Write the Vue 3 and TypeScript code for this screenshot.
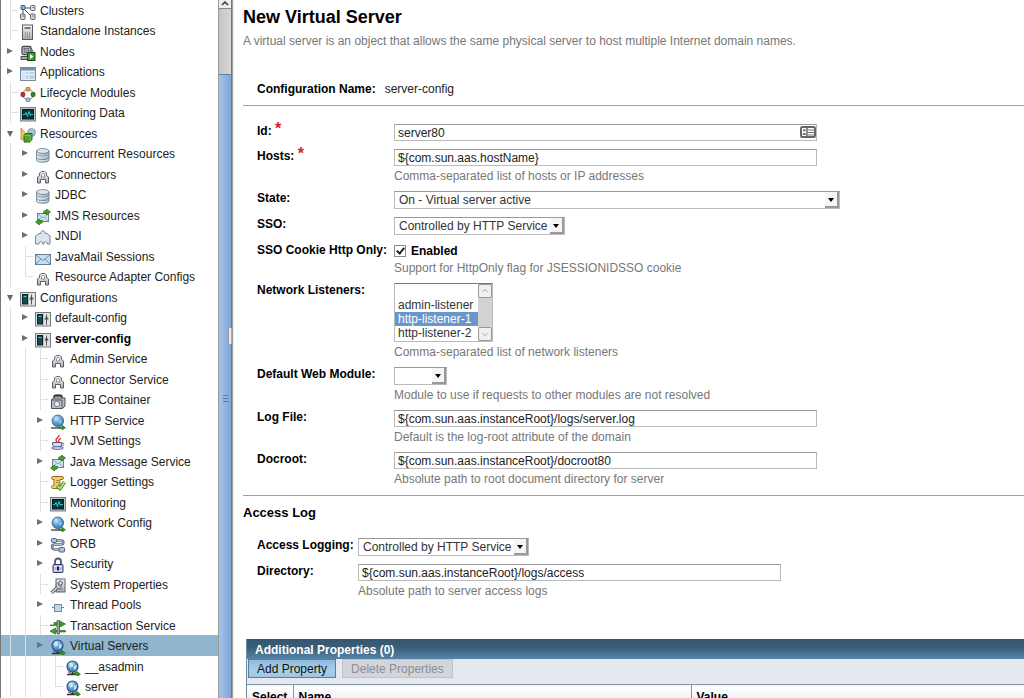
<script setup lang="ts">
import { ref } from 'vue'

type Node = { text: string; guides: string; icon: string; bold?: boolean; selected?: boolean; wide?: boolean }

/* guides: I = line, T = branch, L = last branch, > = closed, v = open */
const nodes: Node[] = [
  { text: 'Clusters', guides: 'T', icon: 'cluster' },
  { text: 'Standalone Instances', guides: 'T', icon: 'server' },
  { text: 'Nodes', guides: '>', icon: 'node' },
  { text: 'Applications', guides: '>', icon: 'app' },
  { text: 'Lifecycle Modules', guides: 'T', icon: 'lifecycle' },
  { text: 'Monitoring Data', guides: 'T', icon: 'monitor' },
  { text: 'Resources', guides: 'v', icon: 'resources' },
  { text: 'Concurrent Resources', guides: 'I>', icon: 'database' },
  { text: 'Connectors', guides: 'I>', icon: 'connector' },
  { text: 'JDBC', guides: 'I>', icon: 'database' },
  { text: 'JMS Resources', guides: 'I>', icon: 'jms' },
  { text: 'JNDI', guides: 'I>', icon: 'jndi' },
  { text: 'JavaMail Sessions', guides: 'IT', icon: 'mail' },
  { text: 'Resource Adapter Configs', guides: 'IL', icon: 'connector' },
  { text: 'Configurations', guides: 'v', icon: 'config' },
  { text: 'default-config', guides: 'I>', icon: 'config' },
  { text: 'server-config', guides: 'I>', icon: 'config', bold: true },
  { text: 'Admin Service', guides: 'IIT', icon: 'connector' },
  { text: 'Connector Service', guides: 'IIT', icon: 'connector' },
  { text: 'EJB Container', guides: 'IIT', icon: 'ejb', wide: true },
  { text: 'HTTP Service', guides: 'II>', icon: 'http' },
  { text: 'JVM Settings', guides: 'IIT', icon: 'java' },
  { text: 'Java Message Service', guides: 'II>', icon: 'jms' },
  { text: 'Logger Settings', guides: 'IIT', icon: 'logger' },
  { text: 'Monitoring', guides: 'IIT', icon: 'monitor' },
  { text: 'Network Config', guides: 'II>', icon: 'http' },
  { text: 'ORB', guides: 'II>', icon: 'orb' },
  { text: 'Security', guides: 'II>', icon: 'lock' },
  { text: 'System Properties', guides: 'IIT', icon: 'system' },
  { text: 'Thread Pools', guides: 'II>', icon: 'thread' },
  { text: 'Transaction Service', guides: 'IIT', icon: 'transaction' },
  { text: 'Virtual Servers', guides: 'II>', icon: 'virtual', selected: true },
  { text: '__asadmin', guides: 'IIIT', icon: 'virtual' },
  { text: 'server', guides: 'IIIL', icon: 'virtual' },
]

const guideClass: Record<string, string> = { I: 'line', T: 'line tee', L: 'last tee', '>': 'closed', v: 'open' }

const icons: Record<string, string> = {
  cluster:
    '<path d="M5 4h6M4 5l8 8M3 5v6" stroke="#555" fill="none"/><rect x="1" y="1.500" width="4" height="4" rx=".5" fill="#7fb2d6" stroke="#3c6280"/><rect x="10.500" y="1.500" width="4.500" height="5" rx="1" fill="#e3e3e6" stroke="#5e6066"/><rect x=".5" y="10" width="4.500" height="5.500" rx="1" fill="#d8d9dd" stroke="#5e6066"/><rect x="10.500" y="10" width="4.500" height="5.500" rx="1" fill="#d8d9dd" stroke="#5e6066"/><path d="M12 3.500h2M2 12h2M12 12h2" stroke="#888"/>',
  server:
    '<rect x="2.500" y="1" width="10" height="14.500" fill="url(#silver)" stroke="#5a5c60"/><path d="M4.500 4h6" stroke="#555" stroke-width="1.500"/><path d="M5 9h6M5 11h6M5 13h6" stroke="#777" stroke-dasharray="1 1"/>',
  node:
    '<rect x="2" y="1.500" width="9" height="8" rx="1.500" fill="#d4d6d8" stroke="#44484c" stroke-width="1.300"/><rect x="4" y="3.500" width="5" height="4" fill="#9ba3a8" stroke="#555" stroke-width=".7"/><path d="M1 11.500h9v3h-9z" fill="#a7aaad" stroke="#44484c"/><path d="M11 3l2 3v4" stroke="#555" fill="none"/><rect x="7.500" y="7.500" width="7.500" height="8" fill="#3f9b27" stroke="#14540d"/><path d="M10 9v5l3.500-2.500z" fill="#fff"/>',
  app:
    '<rect x=".5" y="2.500" width="15" height="13" fill="#e6eef5" stroke="#7b8794"/><path d="M1 3h14v2.500H1z" fill="#7193b4"/><rect x="2" y="7" width="3" height="7" fill="#d3e2ee"/><rect x="6" y="7" width="8.500" height="7" fill="#b9d1e5"/><path d="M6 9.500h8M9 7v7" stroke="#edf4fa"/>',
  lifecycle:
    '<circle cx="8" cy="8.500" r="5.200" fill="none" stroke="#90abc2" stroke-width="1.200"/><rect x="6" y="1.500" width="4" height="3.500" rx="1" fill="#f3a326" stroke="#9c6010" stroke-width=".7"/><rect x="1" y="6.500" width="3.800" height="4" rx="1" fill="#d22a25" stroke="#76110e" stroke-width=".7"/><rect x="11.200" y="6.500" width="3.800" height="4" rx="1" fill="#35881d" stroke="#17460c" stroke-width=".7"/><rect x="6" y="12" width="4" height="3.500" rx="1" fill="#a9c6dd" stroke="#4c6c88" stroke-width=".7"/>',
  monitor:
    '<rect x=".5" y="1.500" width="15" height="13.500" fill="#c4c6c8" stroke="#7c7f83"/><rect x="2.500" y="3.500" width="11" height="9.500" fill="#06343a" stroke="#061d23"/><path d="M3 8.500h2l1-2 1.500 4 1.500-5 1.500 4 .5-1h2" stroke="#2ed4c8" fill="none"/>',
  resources:
    '<path d="M1 1v12l8-3z" fill="#f2c94f" stroke="#b48a1d" stroke-width=".8"/><circle cx="11.500" cy="5.500" r="4" fill="#a9c2d8" stroke="#7990a5" stroke-width=".8"/><path d="M4 8l2-1.500h6v6l-2 2.500H4z" fill="#4fa52c" stroke="#276c14"/><path d="M4 8.500h6.500v6" stroke="#82c761" fill="none" stroke-width=".8"/>',
  database:
    '<path d="M1.500 4v9c0 3 12.500 3 12.500 0V4z" fill="url(#steel)" stroke="#66798a" stroke-width=".8"/><ellipse cx="7.800" cy="4" rx="6.200" ry="2.400" fill="#dbe8f2" stroke="#66798a" stroke-width=".8"/><path d="M1.500 7c0 3 12.500 3 12.500 0M1.500 10.500c0 3 12.500 3 12.500 0" fill="none" stroke="#6d8294"/><path d="M2 8.400c2 2.200 9.500 2.200 11.500 0M2 12c2 2.200 9.500 2.200 11.500 0" fill="none" stroke="#eef5fa" stroke-width=".7"/>',
  connector:
    '<path d="M2.500 15V9l2-1.500V6c0-3.500 7-3.500 7 0v1.500l2 1.500v6h-3v-3.500h-5V15z" fill="url(#silver)" stroke="#5c6066"/><path d="M6.500 9V6.500c0-1.300 3-1.300 3 0V9z" fill="#fff" stroke="#777b80" stroke-width=".8"/>',
  jms:
    '<rect x="2.500" y="4.500" width="11" height="8" fill="#cfe0ee" stroke="#6888a0"/><path d="M3 5l5 4 5-4M3 12l3.500-3.500M13 12L9.500 8.500" fill="none" stroke="#7b9bb2" stroke-width=".8"/><path d="M8.500 3.500c0-1.500 1-2 3-2V0L15.500 3l-4 3V4.500h-3z" fill="#3fa21e" stroke="#1f6a10" stroke-width=".7"/><path d="M7.500 12.500c0 1.500-1 2-3 2V16L.5 13l4-3v1.500h3z" fill="#3fa21e" stroke="#1f6a10" stroke-width=".7"/>',
  jndi:
    '<path d="M4 4.500h2c-1-3.500 5-3.500 4 0h2l3 2.500v8h-3c1-3-4-3-3 0H7.500c1-3-4-3-3.500 0H.5V7z" fill="#d9e4ee" stroke="#7f8791"/>',
  mail:
    '<rect x=".5" y="4.500" width="15" height="10" fill="#c9ddec" stroke="#5f8098"/><path d="M1 5l7 5.500L15 5M1 14l5-5M15 14l-5-5" fill="none" stroke="#6d93b0"/>',
  config:
    '<rect x=".5" y="1.500" width="15" height="13.500" fill="#e3e4e6" stroke="#777a7d"/><rect x="2.500" y="3.500" width="5" height="9.500" fill="#174b50" stroke="#0d2024"/><path d="M3.500 5.500h3" stroke="#4bd0c4"/><path d="M11.500 3.500v10" stroke="#555"/><path d="M9.500 8h4M10 7h3" stroke="#444"/><path d="M8.500 2v12" stroke="#aaa" stroke-width=".6"/>',
  ejb:
    '<path d="M4 6V3.500c0-2 8-2 8 0V6" fill="none" stroke="#333" stroke-width="1.500"/><path d="M1.500 6.500l2-1.500h11.500v8l-2.500 2.500h-11z" fill="#b6bac1" stroke="#4e5157"/><path d="M2 7h10v8" fill="none" stroke="#55585e"/><circle cx="7" cy="11" r="2.600" fill="#eef1fa" stroke="#777d95"/><path d="M4.500 3h7" stroke="#333" stroke-width="1.500"/>',
  http:
    '<circle cx="7.800" cy="6.800" r="5.800" fill="url(#blue)" stroke="#2b608d" stroke-width=".8"/><path d="M4 4c2-2 3-1 4 0s-1 3-3 3zM9 7l3-1-1 4-2-1z" fill="#b2daef" opacity=".6"/><path d="M1 14h9" stroke="#555" stroke-width="1.500"/><path d="M9 13h3v-2l3.500 2.800L12 16v-1.500H9z" fill="#2e981b" stroke="#165c0c" stroke-width=".5"/>',
  java:
    '<path d="M8.500 1c2 2-5 3.500-1.500 7M11 4.500c-4 1-1 2-3 4" fill="none" stroke="#e23a2c" stroke-width="1.500"/><path d="M2.500 8.500h9v2c0 4-8 4-9 0z" fill="#d8d9ec" stroke="#51568b"/><path d="M12 9c3 0 2 3-1 3" fill="none" stroke="#51568b"/><ellipse cx="7.500" cy="14" rx="6" ry="1.500" fill="#c5c8e2" stroke="#51568b" stroke-width=".8"/>',
  logger:
    '<path d="M3 1.500h9c2 0 2 3 0 3h-2v6l1 3H3c-2 0-2-3 0-3h1v-6H3c-2 0-2-3 0-3z" fill="#f3cf72" stroke="#8f6b1d"/><path d="M6 5.500h3M6 7.500h3" stroke="#ae8430"/><path d="M7 10.500l3 3L14.500 7" fill="none" stroke="#3b8d23" stroke-width="3.500"/><path d="M7 10.500l3 3L14.500 7" fill="none" stroke="#b5ea7c" stroke-width="1.600"/>',
  orb:
    '<path d="M4 3.500h7c3 0 3 4 0 4H5c-4 0-4 4 0 5h6" fill="none" stroke="#586572" stroke-width="2.600"/><path d="M4 3.500h7c3 0 3 4 0 4H5c-4 0-4 4 0 5h6" fill="none" stroke="#b7c8d5" stroke-width="1"/><rect x="1.500" y="1.500" width="5" height="4" rx="1" fill="#a8c5dc" stroke="#4c6478"/><rect x="9" y="10.500" width="5.500" height="4.500" rx="1" fill="#a8c5dc" stroke="#4c6478"/>',
  lock:
    '<path d="M5 8V4.500c0-4 6-4 6 0V8" fill="none" stroke="#53586a" stroke-width="1.800"/><rect x="3" y="7.500" width="10" height="8" rx="1" fill="#b6bbdf" stroke="#343966"/><path d="M4 9.500h8M4 13.500h8" stroke="#e8eafa"/><path d="M8 9.500v4" stroke="#1e2248" stroke-width="2"/>',
  system:
    '<rect x="6" y="1" width="9" height="13" fill="url(#silver)" stroke="#60646a"/><circle cx="10.500" cy="5" r="2" fill="#cbdcec" stroke="#5a6672"/><path d="M8 11h5" stroke="#777"/><path d="M1.500 15l6-6" stroke="#5c6066" stroke-width="3.200"/><path d="M1.500 15l6-6" stroke="#d6d9dd" stroke-width="1.500"/><path d="M6 7c0-2 2-3 3-2l-1 2 1.500 1.500 2-1c0 3-3 4-4.500 2.500z" fill="#d6d9dd" stroke="#5c6066" stroke-width=".8"/>',
  thread: '<path d="M2 9.500h12" stroke="#778"/><rect x="4.500" y="6.500" width="7" height="7" fill="#bdd7eb" stroke="#6f889c"/>',
  transaction:
    '<path d="M0 6h4V3.500h6V2l5.500 3L10 8V6.500H0z" fill="#3f9f20" stroke="#1b5e0d" stroke-width=".6"/><path d="M15.500 11.500h-10V9L0 12.200l5.500 3V13h10z" fill="#3f9f20" stroke="#1b5e0d" stroke-width=".6"/><path d="M7 1.500h2.500V15H7z" fill="#9a9fa4" stroke="#44484c" stroke-width=".7"/>',
  virtual:
    '<circle cx="7.500" cy="6.500" r="5.500" fill="url(#blue)" stroke="#31449a" stroke-width="1.100"/><path d="M4 3.500c3-2 3 0 4 1s-1 3-3 3zM9 6l3-1-1 4-2 1z" fill="#cfeed8" opacity=".9"/><path d="M3 11.500c2 2.500 7 2.500 9 0" stroke="#454a50" fill="none"/><path d="M7.500 12v2.500M2 14.500h7" stroke="#333" stroke-width="1.500"/><path d="M9 13.200h3v-1.700l3.500 2.700L12 16.500V15H9z" fill="#2e981b" stroke="#125008" stroke-width=".5"/>',
}

const serverId = ref('server80')
const hosts = ref('${com.sun.aas.hostName}')
const httpOnly = ref(true)
const logFile = ref('${com.sun.aas.instanceRoot}/logs/server.log')
const docroot = ref('${com.sun.aas.instanceRoot}/docroot80')
const directory = ref('${com.sun.aas.instanceRoot}/logs/access')
</script>

<template>
  <div class="console">
    <svg class="defs" width="0" height="0" aria-hidden="true">
      <defs>
        <linearGradient id="silver" x1="0" y1="0" x2="0" y2="1"><stop offset="0" stop-color="#f4f5f6" /><stop offset="1" stop-color="#a9adb3" /></linearGradient>
        <linearGradient id="steel"><stop offset="0" stop-color="#dbe6ef" /><stop offset="1" stop-color="#8ea9c0" /></linearGradient>
        <radialGradient id="blue" cx=".4" cy=".3" r=".8"><stop offset="0" stop-color="#bfe0f5" /><stop offset=".5" stop-color="#5b9fd2" /><stop offset="1" stop-color="#2f6ba0" /></radialGradient>
      </defs>
    </svg>

    <nav class="sidebar">
      <ul class="tree">
        <li v-for="node in nodes" :key="node.text" :class="{ selected: node.selected }">
          <span v-for="(g, i) in node.guides" :key="i" class="guide" :class="guideClass[g]"></span>
          <svg class="icon" viewBox="0 0 16 16" aria-hidden="true" v-html="icons[node.icon]"></svg>
          <a href="#" :class="{ bold: node.bold, wide: node.wide }">{{ node.text }}</a>
        </li>
      </ul>
      <div class="scrollbar">
        <div class="up"><svg viewBox="0 0 12 8"><path d="M3 5l3-3 3 3" fill="none" stroke="#333" stroke-width="1.500" /></svg></div>
        <div class="thumb"><span class="ridges"></span></div>
      </div>
    </nav>
    <div class="splitter"><span class="grip"></span></div>

    <main>
      <h1>New Virtual Server</h1>
      <p class="intro">A virtual server is an object that allows the same physical server to host multiple Internet domain names.</p>

      <div class="config"><b>Configuration Name:</b><span>server-config</span></div>

      <form class="fields" @submit.prevent>
        <div class="row">
          <label for="id">Id: <span class="req">*</span></label>
          <div class="control text">
            <input id="id" v-model="serverId" type="text" />
            <svg class="card" viewBox="0 0 16 12" aria-hidden="true"><rect x="1" y="1" width="14" height="10" rx="1.500" fill="#fff" stroke="#666" stroke-width="2" /><path d="M7 1v10" stroke="#666" stroke-width="1.500" /><path d="M8 4h6M8 6.500h6M8 9h6" stroke="#777" /><circle cx="4.300" cy="4.300" r="1.300" fill="#777" /><path d="M2.500 9c0-3 3.500-3 3.500 0z" fill="#777" /></svg>
          </div>
        </div>
        <div class="row helped">
          <label for="hosts">Hosts: <span class="req">*</span></label>
          <div class="control text"><input id="hosts" v-model="hosts" type="text" /><p>Comma-separated list of hosts or IP addresses</p></div>
        </div>
        <div class="row">
          <label for="state">State:</label>
          <div class="control"><span class="drop state"><select id="state"><option>On - Virtual server active</option></select></span></div>
        </div>
        <div class="row">
          <label for="sso">SSO:</label>
          <div class="control"><span class="drop medium"><select id="sso"><option>Controlled by HTTP Service</option></select></span></div>
        </div>
        <div class="row helped">
          <label for="cookie">SSO Cookie Http Only:</label>
          <div class="control"><span class="check"><input id="cookie" v-model="httpOnly" type="checkbox" /><label for="cookie">Enabled</label></span><p>Support for HttpOnly flag for JSESSIONIDSSO cookie</p></div>
        </div>
        <div class="row helped">
          <label for="listeners">Network Listeners:</label>
          <div class="control">
            <div class="listbox">
              <select id="listeners" multiple size="4">
                <option></option><option>admin-listener</option><option selected>http-listener-1</option><option>http-listener-2</option>
              </select>
              <span class="mini-scroll" aria-hidden="true">
                <svg viewBox="0 0 14 14"><path d="M4 8l3-3 3 3" fill="none" stroke="#999" /></svg>
                <svg viewBox="0 0 14 14"><path d="M4 6l3 3 3-3" fill="none" stroke="#999" /></svg>
              </span>
            </div>
            <p>Comma-separated list of network listeners</p>
          </div>
        </div>
        <div class="row helped">
          <label for="module">Default Web Module:</label>
          <div class="control"><span class="drop small"><select id="module"><option></option></select></span><p>Module to use if requests to other modules are not resolved</p></div>
        </div>
        <div class="row helped">
          <label for="log">Log File:</label>
          <div class="control text"><input id="log" v-model="logFile" type="text" /><p>Default is the log-root attribute of the domain</p></div>
        </div>
        <div class="row helped">
          <label for="docroot">Docroot:</label>
          <div class="control text"><input id="docroot" v-model="docroot" type="text" /><p>Absolute path to root document directory for server</p></div>
        </div>
      </form>

      <h2>Access Log</h2>
      <form class="fields access" @submit.prevent>
        <div class="row">
          <label for="logging">Access Logging:</label>
          <div class="control"><span class="drop medium"><select id="logging"><option>Controlled by HTTP Service</option></select></span></div>
        </div>
        <div class="row helped">
          <label for="directory">Directory:</label>
          <div class="control text"><input id="directory" v-model="directory" type="text" /><p>Absolute path to server access logs</p></div>
        </div>
      </form>

      <section class="properties">
        <h3>Additional Properties (0)</h3>
        <div class="actions"><button type="button">Add Property</button><button type="button" disabled>Delete Properties</button></div>
        <table>
          <thead><tr><th class="pick">Select</th><th class="name">Name</th><th>Value</th></tr></thead>
        </table>
      </section>
    </main>
  </div>
</template>

<style>
body { margin: 0; background: #fff; overflow: hidden; }
</style>

<style scoped>
.console { display: flex; height: 100vh; overflow: hidden; font: 12px/16px "Liberation Sans", Arial, sans-serif; color: #222; background: #fff; }
.console *, .console *::before, .console *::after { box-sizing: border-box; }
.defs { position: absolute; }

.sidebar { display: flex; flex: 0 0 231px; border-left: 1px solid #777; overflow: hidden; }
.tree { flex: 1; list-style: none; margin: 0; padding: 0; }
.tree li { display: flex; height: 20px; padding-left: 2px; white-space: nowrap; }
.tree li:nth-child(even) { height: 21px; }
.tree li.selected { background: #8fb5cf; }
.guide { position: relative; flex: 0 0 15px; }
.guide.line::before, .guide.last::before { content: ""; position: absolute; left: 7px; top: 0; bottom: 0; border-left: 1px solid #e0e0e0; }
.guide.last::before { bottom: 50%; }
.guide.tee::after { content: ""; position: absolute; left: 8px; top: 10px; width: 7px; border-top: 1px solid #e0e0e0; }
.guide.closed::before { content: ""; position: absolute; left: 4px; top: 7px; border: 3px solid transparent; border-left: 6px solid #707070; border-right: 0; }
.guide.open::before { content: ""; position: absolute; left: 4px; top: 8px; border: 3px solid transparent; border-top: 6px solid #666; border-bottom: 0; }
.icon { flex: none; width: 16px; height: 16px; margin: 4px 4px 0 2px; }
.tree a { color: #222; text-decoration: none; line-height: 22px; }
.tree a.bold { font-weight: bold; color: #000; }
.tree a.wide { padding-left: 3px; }

.scrollbar { flex: 0 0 13px; display: flex; flex-direction: column; background: linear-gradient(90deg, #c6c5c3, #d8d7d5); border-left: 1px solid #999; }
.up { flex: 0 0 9px; background: #eee; border-bottom: 1px solid #888; }
.up svg { display: block; width: 12px; height: 8px; }
.thumb { flex: 1; display: flex; align-items: center; justify-content: center; margin-top: 65px; padding-top: 24px; border-top: 1px solid #5c82b2; background: linear-gradient(90deg, #a6c4ea, #7ea5d8); }
.ridges { width: 5px; height: 8px; background: repeating-linear-gradient(#5579a8 0 1px, transparent 1px 3px); }
.splitter { flex: 0 0 3px; display: flex; align-items: center; background: linear-gradient(90deg, #777 0 1px, #a5a09c 1px 2px, #eee 2px); }
.grip { flex: none; width: 5px; height: 16px; margin: 0 0 26px -3px; background: repeating-linear-gradient(90deg, #eee 0 2px, #aaa 2px 3px); border: solid #999; border-width: 0 1px; }

main { flex: 1; min-width: 0; padding: 6px 0 0 9px; overflow: hidden; }
h1 { margin: 0; font-size: 18px; line-height: 22px; color: #000; }
.intro { margin: 5px 0 0; color: #777; white-space: nowrap; }
.config { display: flex; gap: 9px; margin-top: 32px; padding: 0 0 8px 14px; border-bottom: 1px solid #9aa4ac; color: #222; }
.config b { color: #000; }

.fields { padding: 18px 0 8px 14px; border-bottom: 1px solid #9aa4ac; }
.row { display: grid; grid-template-columns: 137px minmax(0, 1fr); margin-bottom: 8px; }
.row.helped { margin-bottom: 7px; }
.row:last-child { margin-bottom: 0; }
.access .row { grid-template-columns: 101px minmax(0, 1fr); }
.fields label { font-weight: bold; line-height: 14px; color: #000; white-space: nowrap; }
.req { color: #d3202a; font-size: 16px; line-height: 10px; vertical-align: 1px; font-weight: bold; }
.control { position: relative; display: flex; flex-direction: column; align-items: flex-start; }
.control.text { max-width: 423px; }
.control p { margin: 2px 0 0; color: #777; white-space: nowrap; }
input[type="text"] { width: 100%; height: 17px; margin: 0; padding: 1px 3px 0; border: 1px solid #bbb; border-top-color: #999; outline: 0; background: #fff; color: #222; font: inherit; }
.card { position: absolute; right: 1px; top: 2px; width: 16px; height: 12px; }
.drop { position: relative; display: block; height: 18px; max-width: 100%; border: 1px solid #bbb; border-top-color: #999; }
.drop select { display: block; appearance: none; width: 100%; height: 16px; margin: 0; padding: 0 13px 0 4px; border: 0; outline: 0; border-radius: 0; background: transparent; color: #333; font: inherit; }
.drop::before { content: ""; position: absolute; right: 0; top: 0; width: 14px; height: 16px; background: #f5f5f5; border: solid #999; border-width: 0 2px 2px 0; pointer-events: none; }
.drop::after { content: ""; position: absolute; right: 5px; top: 6px; border: 3px solid transparent; border-top: 4px solid #000; border-bottom: 0; pointer-events: none; }
.drop.state { width: 446px; }
.drop.medium { width: 171px; }
.drop.small { width: 53px; }
.check { display: flex; align-items: center; gap: 5px; height: 15px; }
.check input { appearance: none; width: 12px; height: 12px; margin: 0; border: 1px solid #888; background: #fff; position: relative; }
.check input:checked::after { content: ""; position: absolute; left: 3px; top: 0; width: 5px; height: 8px; border: solid #222; border-width: 0 2px 2px 0; transform: rotate(40deg); }
.listbox { display: flex; width: 99px; height: 59px; border: 1px solid #bbb; border-top-color: #777; }
.listbox select { flex: 1; min-width: 0; height: 57px; margin: 0; padding: 0; border: 0; outline: 0; border-radius: 0; overflow: hidden; background: #fff; color: #333; font: inherit; }
.listbox option { height: 14px; min-height: 14px; padding: 0 3px; line-height: 14px; color: #333; }
.listbox option:checked { background: linear-gradient(#6b96cb, #6b96cb); color: #fff; }
.mini-scroll { flex: 0 0 14px; display: flex; flex-direction: column; justify-content: space-between; background: #d3d2d0; }
.mini-scroll svg { width: 14px; height: 14px; border: 1px solid #999; border-radius: 2px; background: #f0f0f0; }

h2 { margin: 9px 0 0; font-size: 13px; line-height: 16px; color: #000; }
.access { padding-top: 17px; border-bottom: 0; }

.properties { margin: 32px 0 0 3px; border-left: 1px solid #6f8ba1; background: #e5e8ec; }
h3 { margin: 0; padding: 3px 8px 1px; font-size: 12px; line-height: 16px; color: #fff; background: linear-gradient(#35566e, #3a5d77 40%, #5484a8); }
.actions { display: flex; gap: 6px; height: 25px; padding-left: 1px; }
.actions button { height: 19px; padding: 0 8px; border: 1px solid #5c7f99; border-radius: 0; font: inherit; color: #111; background: linear-gradient(#8dbad9, #a9d0ea 60%, #9dc6e2); }
.actions button:disabled { color: #8b8f94; border-color: #bfc3c8; background: #d2d5d9; }
table { width: 100%; border-collapse: collapse; table-layout: fixed; }
th { height: 24px; padding: 0 5px; text-align: left; border: solid #8297a8; border-width: 1px 0 1px 1px; background: linear-gradient(#fff, #e4e7ea); color: #000; }
th:first-child { border-left: 0; }
.pick { width: 46px; }
.name { width: 398px; }
</style>
